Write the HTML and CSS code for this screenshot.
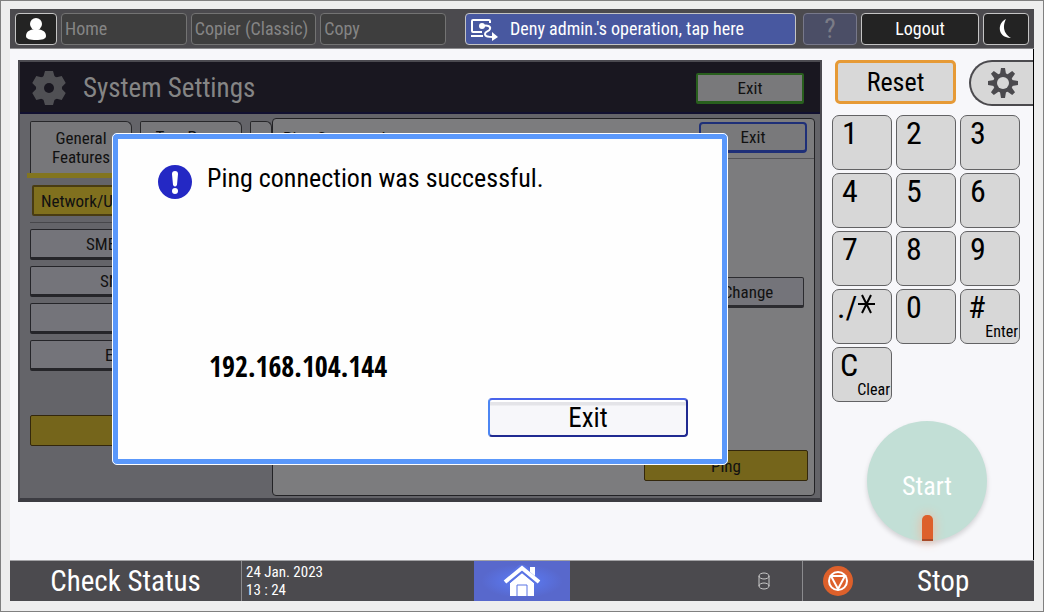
FILE: index.html
```html
<!DOCTYPE html>
<html lang="en">
<head>
  <meta charset="UTF-8">
  <meta name="viewport" content="width=device-width, initial-scale=1.0">
  <title>System Settings</title>
  <link rel="stylesheet" href="styles.css">
</head>
<body>
  <div class="device">
    <header class="topbar">
      <button class="top-btn user" aria-label="User">
        <svg width="22" height="24" viewBox="0 0 22 24"><circle cx="11" cy="7" r="6" fill="#fff"/><path d="M1 19c0-5 5-7 10-7s10 2 10 7c0 3-4 4-10 4S1 22 1 19z" fill="#fff"/></svg>
      </button>
      <button class="top-btn app">Home</button>
      <button class="top-btn app">Copier (Classic)</button>
      <button class="top-btn app">Copy</button>
      <button class="top-btn deny">
        <svg width="28" height="24" viewBox="0 0 28 24" fill="none" stroke="#fff" stroke-width="2"><path d="M20 6V4q0-1-1-1H3Q2 3 2 4v10q0 1 1 1h9M1 19h12"/><circle cx="12" cy="9" r="3" fill="#fff" stroke="none"/><path d="M13 9c4-1 8 0 7 3s-5 2-5 5 4 3 8 3"/><path d="M22 15l6 5-6 4z" fill="#fff" stroke="none"/></svg>
        <span>Deny admin.'s operation, tap here</span>
      </button>
      <button class="top-btn help" aria-label="Help">?</button>
      <button class="top-btn logout">Logout</button>
      <button class="top-btn moon" aria-label="Energy saver">
        <svg width="16" height="22" viewBox="0 0 16 22"><path d="M8 1C-1 5-1 20 13 20C6 16 4 9 8 1z" fill="#fff"/></svg>
      </button>
    </header>

    <main class="main">
      <section class="screen">
        <div class="screen-head">
          <svg width="36" height="36" viewBox="-18 -18 36 36"><g fill="#505054"><circle r="13"/><path id="tooth" d="M-4-17h8l2 7H-6zM-4 17h8l2-7H-6z"/><use href="#tooth" transform="rotate(60)"/><use href="#tooth" transform="rotate(120)"/></g><circle r="5" fill="#191720"/></svg>
          <h1>System Settings</h1>
          <button class="soft-btn green">Exit</button>
        </div>

        <div class="screen-body">
          <div class="left">
            <nav class="tabs">
              <button class="tab">General<br>Features</button>
              <button class="tab">Tray Paper</button>
              <button class="tab last" aria-label="Next tab"></button>
            </nav>
            <div class="menu">
              <button class="menu-btn selected">Network/U</button>
              <hr>
              <button class="menu-btn smb">SMB</button>
              <button class="menu-btn snmp">SN</button>
              <button class="menu-btn" aria-label="Item"></button>
              <button class="menu-btn edit">E</button>
              <button class="menu-btn wide-gap" aria-label="Item"></button>
            </div>
          </div>

          <div class="right">
            <div class="right-head">
              <h2>Ping Command</h2>
              <button class="soft-btn blue">Exit</button>
            </div>
            <button class="soft-btn change">Change</button>
            <button class="soft-btn ping">Ping</button>
          </div>
        </div>

        <div class="dialog" role="dialog" aria-labelledby="message">
          <div class="message">
            <svg width="35" height="35" viewBox="0 0 35 35"><circle cx="17" cy="17" r="17" fill="#2428c4"/><path d="M14 9q0-3 3-3t3 3l-1 11q-2 3-4 0z" fill="#fff"/><circle cx="17" cy="26" r="3" fill="#fff"/></svg>
            <p id="message">Ping connection was successful.</p>
          </div>
          <p class="address">192.168.104.144</p>
          <button class="dialog-exit">Exit</button>
        </div>
      </section>

      <aside class="side">
        <div class="side-top">
          <button class="reset">Reset</button>
          <button class="gear" aria-label="Settings">
            <svg width="30" height="30" viewBox="-15 -15 30 30"><g fill="#4b4a4e"><circle r="10"/><path id="cog" d="M-2-15h4l1 6h-6zM-2 15h4l1-6h-6z"/><use href="#cog" transform="rotate(45)"/><use href="#cog" transform="rotate(90)"/><use href="#cog" transform="rotate(135)"/></g><circle r="6" fill="#d7d7d7"/></svg>
          </button>
        </div>
        <div class="keypad">
          <button>1</button>
          <button>2</button>
          <button>3</button>
          <button>4</button>
          <button>5</button>
          <button>6</button>
          <button>7</button>
          <button>8</button>
          <button>9</button>
          <button class="star">./<svg width="19" height="22" viewBox="0 0 19 22" stroke="#000" stroke-width="2"><path d="M1 11h17M5 2l9 18M14 2L5 20"/></svg></button>
          <button>0</button>
          <button class="labelled"># <small>Enter</small></button>
          <button class="labelled">C <small>Clear</small></button>
        </div>
        <button class="start"><span>Start</span><i></i></button>
      </aside>
    </main>

    <footer class="bottombar">
      <button class="status">Check Status</button>
      <p class="date">24 Jan. 2023<br>13 : 24</p>
      <button class="home" aria-label="Home">
        <svg width="38" height="32" viewBox="0 0 38 32"><path d="M27 2h5v10l-5-4z" fill="#fff"/><path d="M7 18L19 8l12 10v13H7z" fill="#fff"/><path d="M2 17L19 3l17 14" fill="none" stroke="#5b74e4" stroke-width="8"/><path d="M2 17L19 3l17 14" fill="none" stroke="#fff" stroke-width="4"/><path d="M27 2h5v9l-5-4z" fill="#fff"/><path d="M14 31V20h10v11" fill="none" stroke="#5b74e4" stroke-width="1"/></svg>
      </button>
      <div class="tray">
        <svg width="13" height="18" viewBox="0 0 13 18" fill="none" stroke="#c9c9c9"><ellipse cx="6" cy="4" rx="5" ry="3"/><ellipse cx="6" cy="14" rx="5" ry="3"/><path d="M1 4v10M11 4v10"/></svg>
      </div>
      <button class="stop">
        <svg width="30" height="30" viewBox="0 0 30 30"><circle cx="15" cy="15" r="15" fill="#dd602b"/><g fill="none" stroke="#fff" stroke-width="2"><circle cx="15" cy="15" r="9"/><path d="M8 10h14l-7 13z"/></g></svg>
        <span>Stop</span>
      </button>
    </footer>
  </div>
</body>
</html>
```
FILE: styles.css
```css
* {
  box-sizing: border-box;
}

body {
  margin: 0;
  font-family: "Roboto Condensed", "Noto Sans CJK JP", sans-serif;
  color: #000;
}

button {
  font-family: inherit;
  color: inherit;
  margin: 0;
  padding: 0;
  white-space: nowrap;
  cursor: pointer;
}

h1, h2, p {
  margin: 0;
  font-weight: normal;
}

svg {
  display: block;
  flex: none;
}

.device {
  display: flex;
  flex-direction: column;
  min-height: 100vh;
  padding: 8px 9px 10px;
  border: 1px solid #808080;
  background-color: #eeeeee;
}

/* top bar */
.topbar {
  display: flex;
  align-items: center;
  gap: 4px;
  height: 40px;
  padding: 0 5px;
  background-color: #4b4a4e;
  border-bottom: 1px solid #8b8b8e;
}

.top-btn {
  display: flex;
  align-items: center;
  justify-content: center;
  height: 32px;
  border: 1px solid #c4c4c4;
  border-radius: 4px;
  background-color: #232323;
  color: #fff;
  font-size: 18px;
}

.user {
  width: 42px;
}

.app {
  flex: 1;
  min-width: 0;
  justify-content: flex-start;
  padding-left: 3px;
  background-color: #3e3e3e;
  border-color: #737373;
  color: #858585;
}

.deny {
  width: 331px;
  margin-left: 15px;
  padding-left: 4px;
  justify-content: flex-start;
  gap: 12px;
  background-color: #4858a0;
}

.help {
  width: 54px;
  margin-left: 3px;
  background-color: #4b4e66;
  border-color: #77788a;
  color: #7b7c86;
  font-size: 27px;
}

.logout {
  width: 118px;
}

.moon {
  width: 46px;
}

/* main area */
.main {
  display: flex;
  flex: 1;
  gap: 10px;
  padding: 11px 0 0 8px;
  background-color: #f7f7fa;
  border-right: 1px solid #000;
}

.screen {
  position: relative;
  display: flex;
  flex-direction: column;
  flex: 1;
  align-self: flex-start;
  height: 442px;
  border: 2px solid #4b4a50;
  border-bottom: 4px solid #3c3c42;
  background-color: #646469;
  color: #111;
}

.screen-head {
  display: flex;
  align-items: center;
  height: 52px;
  padding: 2px 16px 0 11px;
  gap: 16px;
  background-color: #191720;
  border-bottom: 2px solid #111030;
}

.screen-head h1 {
  flex: 1;
  font-size: 27px;
  color: #858585;
}

.soft-btn {
  height: 31px;
  border: 1px solid #2c2c30;
  border-bottom-width: 3px;
  border-radius: 2px;
  background-color: #74747a;
  font-size: 17px;
}

.green, .blue {
  width: 108px;
  background-color: #79797b;
  border: 2px solid #285f1d;
  border-bottom-width: 3px;
}

.blue {
  border-color: #1e2f78;
  border-radius: 4px;
}

.screen-body {
  display: flex;
  flex: 1;
  padding: 4px 5px 2px 7px;
}

.left {
  width: 245px;
  padding-top: 3px;
}

.tabs {
  display: flex;
  gap: 8px;
  height: 57px;
  padding-left: 3px;
  border-bottom: 5px solid #827520;
  overflow: hidden;
}

.tab {
  width: 102px;
  border: 1px solid #27272a;
  border-bottom: none;
  border-radius: 2px 6px 0 0;
  background-color: #77777a;
  font-size: 17px;
  line-height: 19px;
}

.tab + .tab {
  padding-bottom: 21px;
}

.tab.last {
  width: 22px;
  flex: none;
}

.menu {
  display: flex;
  flex-direction: column;
  gap: 6px;
  padding: 7px 10px 0 3px;
}

.menu hr {
  width: 100%;
  margin: 0;
  border: 0;
  border-top: 1px solid #47474b;
}

.menu-btn {
  height: 31px;
  border: 1px solid #252529;
  border-bottom-width: 3px;
  border-radius: 2px;
  background-color: #74747a;
  font-size: 17px;
  text-align: left;
}

.menu-btn.selected {
  margin-left: 2px;
  padding-left: 7px;
  background-color: #80701e;
  border: 2px solid #493c12;
}

.menu-btn.smb {
  padding-left: 55px;
}

.menu-btn.snmp {
  padding-left: 69px;
}

.menu-btn.edit {
  padding-left: 74px;
}

.menu-btn.wide-gap {
  margin-top: 38px;
  background-color: #75651b;
  border: 1px solid #33270c;
}

.right {
  display: flex;
  flex-direction: column;
  flex: 1;
  align-items: flex-end;
  border: 1px solid #222225;
  border-radius: 4px;
  background-color: #7c7c7e;
}

.right-head {
  display: flex;
  justify-content: space-between;
  align-items: flex-start;
  width: 100%;
  height: 40px;
  padding: 3px 7px 0 10px;
  border-bottom: 1px solid #555558;
}

.right-head h2 {
  margin-top: 6px;
  font-size: 17px;
}

.change {
  width: 112px;
  margin: 118px 10px 0 0;
}

.ping {
  width: 164px;
  margin: auto 6px 14px 0;
  background-color: #75651b;
  border: 1px solid #33270c;
}

/* result dialog, lies over the settings screen */
.dialog {
  position: absolute;
  top: 71px;
  left: 92px;
  right: 92px;
  display: flex;
  flex-direction: column;
  height: 332px;
  padding: 23px 34px 22px 40px;
  border: 6px solid #5a98fb;
  border-radius: 5px;
  outline: 1px solid #fff;
  outline-offset: -1px;
  background-color: #fefefe;
  color: #000;
}

.message {
  display: flex;
  gap: 14px;
  height: 40px;
}

.message svg {
  align-self: center;
}

.message p {
  font-size: 26px;
  line-height: 32px;
}

.address {
  margin: 148px 0 0 51px;
  font-family: "Open Sans Condensed", "Roboto Condensed", sans-serif;
  font-size: 28px;
  font-weight: bold;
  line-height: 32px;
}

.dialog-exit {
  align-self: flex-end;
  width: 200px;
  height: 39px;
  margin-top: auto;
  border: 2px solid;
  border-color: #4964eb #202a91 #202a91 #4c86f3;
  border-radius: 4px;
  background: linear-gradient(#fff 2px, #e4e4e8 2px, #e4e4e8 5px, #f7f7fa 6px);
  font-size: 27px;
  line-height: 32px;
}

/* right side keys */
.side {
  width: 201px;
}

.side-top {
  display: flex;
  justify-content: space-between;
  height: 46px;
  padding-left: 3px;
}

.reset {
  width: 121px;
  height: 44px;
  border: 3px solid #e69a36;
  border-radius: 5px;
  background-color: #d8d8d8;
  font-size: 26px;
}

.gear {
  display: flex;
  align-items: center;
  width: 64px;
  padding-left: 17px;
  border: 2px solid #4b4a4e;
  border-right: none;
  border-radius: 23px 0 0 23px;
  background-color: #d7d7d7;
}

.keypad {
  display: grid;
  grid-template-columns: repeat(3, 60px);
  gap: 3px 4px;
  margin-top: 9px;
}

.keypad button {
  display: flex;
  flex-direction: column;
  align-items: flex-start;
  justify-content: flex-start;
  height: 55px;
  padding: 0 1px 0 9px;
  border: 1px solid #626264;
  border-radius: 7px;
  background-color: #d7d7d7;
  font-size: 32px;
  line-height: 34px;
}

.keypad .star {
  flex-direction: row;
  padding-left: 4px;
}

.star svg {
  margin-top: 3px;
}

.keypad .labelled {
  padding-left: 7px;
}

.labelled small {
  align-self: flex-end;
  font-size: 16px;
  line-height: 16px;
}

.start {
  display: flex;
  flex-direction: column;
  align-items: center;
  justify-content: flex-end;
  width: 120px;
  height: 120px;
  margin: 19px 0 0 35px;
  border: none;
  border-radius: 50%;
  background-color: #c2dfd6;
  box-shadow: 0 3px 5px rgba(0, 0, 0, 0.15);
  color: #fff;
  font-size: 26px;
}

.start i {
  width: 11px;
  height: 26px;
  margin-top: 14px;
  border-bottom: 2px solid #a84a28;
  border-radius: 5px 5px 0 0;
  background-color: #dd602b;
  box-shadow: 0 0 12px #f5b79c;
}

/* bottom bar */
.bottombar {
  display: grid;
  grid-template-columns: 231px 1fr 96px 1fr 231px;
  height: 41px;
  border-top: 1px solid #a3a3a6;
  background-color: #4b4a4e;
  color: #fff;
}

.bottombar button {
  border: none;
  background: none;
}

.bottombar .status,
.bottombar .stop {
  font-size: 29px;
  line-height: 38px;
}

.date {
  padding: 2px 0 0 4px;
  border-left: 1px solid #8b8b8e;
  font-size: 15px;
  line-height: 18px;
}

.bottombar .home {
  display: flex;
  align-items: center;
  justify-content: center;
  background: radial-gradient(#5b7cf8, #5868cc 60%);
}

.tray {
  display: flex;
  align-items: center;
  justify-content: flex-end;
  padding-right: 31px;
  border-right: 1px solid #8b8b8e;
}

.bottombar .stop {
  display: flex;
  align-items: center;
  gap: 64px;
  padding-left: 20px;
}
```
